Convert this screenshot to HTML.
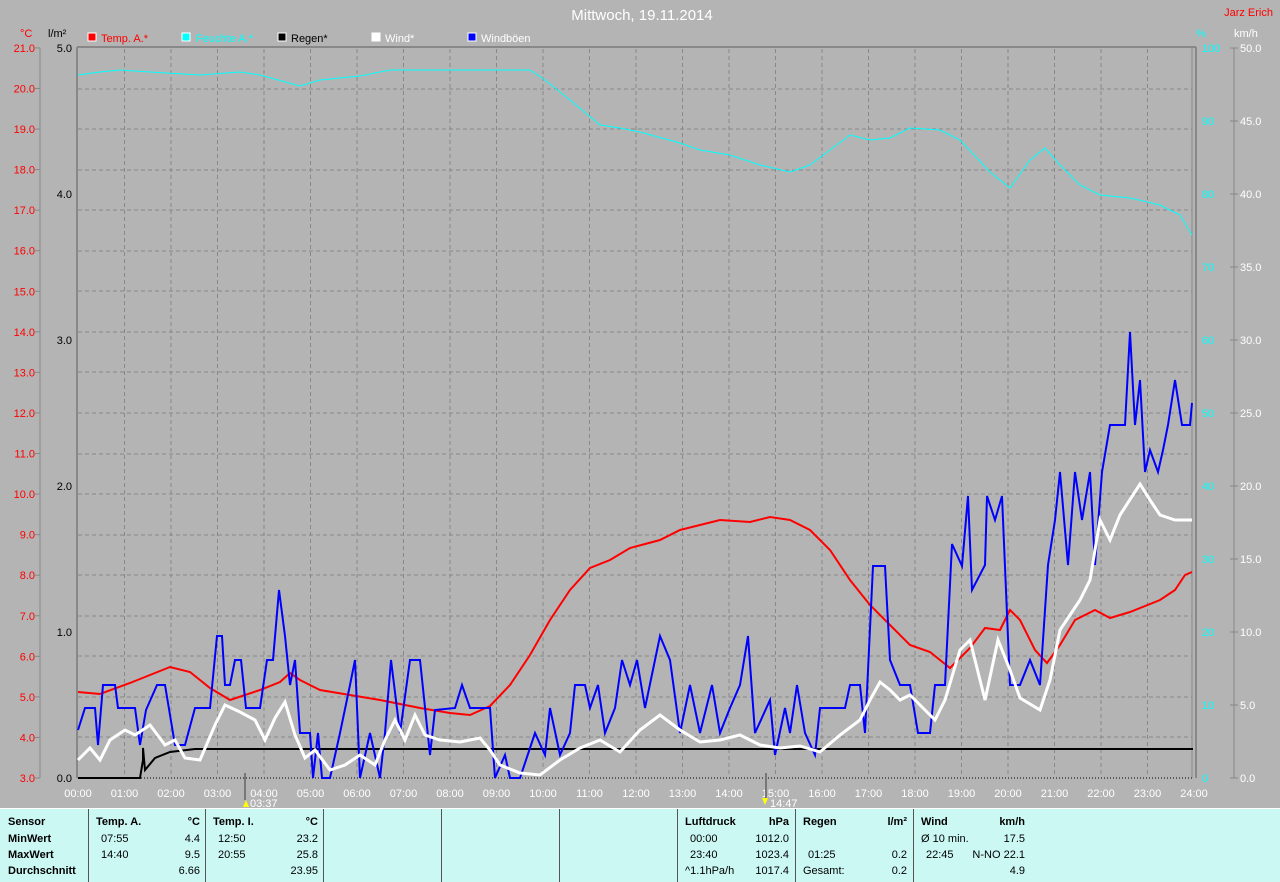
<!DOCTYPE html>
<html><head><meta charset="utf-8"><style>
body{margin:0;width:1280px;height:881px;background:#b4b4b4;overflow:hidden;font-family:"Liberation Sans",sans-serif}
svg{position:absolute;left:0;top:0}
.tb{position:absolute;left:0;top:808px;width:1280px;height:73px;background:#ccf8f4;border-top:1px solid #fff}
.c{position:absolute;top:0;height:73px;border-left:1px solid #555;font-size:11px;color:#000}
.r{position:absolute;white-space:nowrap}
.b{font-weight:bold}
</style></head><body>
<svg width="1280" height="808" viewBox="0 0 1280 808" font-family="Liberation Sans, sans-serif" font-size="11">
<text x="642" y="20" fill="#fff" font-size="15" text-anchor="middle">Mittwoch, 19.11.2014</text>
<text x="1273" y="16" fill="#f00" font-size="11" text-anchor="end">Jarz Erich</text>
<!-- legend -->
<rect x="88" y="33" width="8" height="8" fill="#f00" stroke="#fff"/><text x="101" y="42" fill="#f00">Temp. A.*</text>
<rect x="182" y="33" width="8" height="8" fill="#0ff" stroke="#fff"/><text x="196" y="42" fill="#0ff">Feuchte A.*</text>
<rect x="278" y="33" width="8" height="8" fill="#000" stroke="#fff"/><text x="291" y="42" fill="#000">Regen*</text>
<rect x="372" y="33" width="8" height="8" fill="#fff" stroke="#fff"/><text x="385" y="42" fill="#fff">Wind*</text>
<rect x="468" y="33" width="8" height="8" fill="#00f" stroke="#fff"/><text x="481" y="42" fill="#fff">Windböen</text>
<text x="20" y="37" fill="#f00">°C</text><text x="48" y="37" fill="#000">l/m²</text>
<text x="1196" y="37" fill="#0ff">%</text><text x="1234" y="37" fill="#fff">km/h</text>
<!-- axes lines -->
<line x1="40" y1="48" x2="40" y2="778" stroke="#888"/>
<line x1="1234" y1="48" x2="1234" y2="778" stroke="#888"/>
<g stroke="#888" stroke-width="2"><line x1="77" y1="47" x2="1196" y2="47"/><line x1="77" y1="47" x2="77" y2="778"/><line x1="1196" y1="47" x2="1196" y2="778"/></g>
<line x1="1192" y1="48" x2="1192" y2="778" stroke="#888"/>
<g id="grid" stroke="#888" stroke-dasharray="4,3">
<line x1="78" x2="1192" y1="89" y2="89"/><line x1="78" x2="1192" y1="129" y2="129"/><line x1="78" x2="1192" y1="170" y2="170"/><line x1="78" x2="1192" y1="210" y2="210"/><line x1="78" x2="1192" y1="251" y2="251"/><line x1="78" x2="1192" y1="291" y2="291"/><line x1="78" x2="1192" y1="332" y2="332"/><line x1="78" x2="1192" y1="372" y2="372"/><line x1="78" x2="1192" y1="413" y2="413"/><line x1="78" x2="1192" y1="454" y2="454"/><line x1="78" x2="1192" y1="494" y2="494"/><line x1="78" x2="1192" y1="535" y2="535"/><line x1="78" x2="1192" y1="575" y2="575"/><line x1="78" x2="1192" y1="616" y2="616"/><line x1="78" x2="1192" y1="656" y2="656"/><line x1="78" x2="1192" y1="697" y2="697"/><line x1="78" x2="1192" y1="737" y2="737"/>
</g>
<g stroke="#888" stroke-dasharray="4,3" id="vg"></g>
<line x1="78" y1="778" x2="1192" y2="778" stroke="#000" stroke-dasharray="1,2"/>
<g fill="#f00" text-anchor="end" id="tl"></g>
<g fill="#000" text-anchor="end">
<text x="72" y="52">5.0</text><text x="72" y="198">4.0</text><text x="72" y="344">3.0</text><text x="72" y="490">2.0</text><text x="72" y="636">1.0</text><text x="72" y="782">0.0</text></g>
<g fill="#0ff" id="hl"></g>
<g fill="#fff" id="wl"></g>
<g fill="#fff" text-anchor="middle" id="xl"></g>
<line x1="245" y1="773" x2="245" y2="800" stroke="#777" stroke-width="2"/>
<line x1="766" y1="773" x2="766" y2="800" stroke="#777" stroke-width="2"/>
<text x="250" y="807" fill="#fff">03:37</text><polygon points="243,807 246,800 249,807" fill="#ff0"/>
<text x="770" y="807" fill="#fff">14:47</text><polygon points="762,798 768,798 765,805" fill="#ff0"/>
<!-- humidity -->
<polyline fill="none" stroke="#0ff" stroke-width="1" points="78,75 100,72 120,70 150,72 200,75 240,72 260,75 300,86 320,80 360,76 390,70 530,70 545,80 570,100 600,125 620,128 640,132 680,143 700,150 730,155 760,165 790,172 810,165 830,150 850,135 870,140 890,138 910,128 940,130 960,140 990,172 1010,188 1030,160 1045,148 1060,165 1080,185 1100,195 1130,198 1160,205 1180,215 1192,235"/>
<!-- rain -->
<polyline fill="none" stroke="#000" stroke-width="2" points="78,778 140,778 143,760 143,748 145,770 155,758 170,752 195,749 1193,749"/>
<!-- temp -->
<polyline fill="none" stroke="#f00" stroke-width="2" points="78,692 100,694 130,683 150,675 170,667 190,672 210,688 230,700 260,690 280,682 290,673 300,680 320,690 350,695 380,700 420,708 450,713 470,715 490,706 510,685 530,655 550,620 570,590 590,568 610,560 630,548 660,540 680,530 720,520 750,522 770,517 790,520 810,530 830,550 850,580 870,605 890,625 910,645 930,652 950,668 970,648 985,628 1000,630 1010,610 1020,620 1035,650 1047,663 1060,645 1075,620 1095,610 1110,618 1130,612 1160,600 1175,590 1185,575 1192,572"/>
<!-- gusts -->
<polyline fill="none" stroke="#00f" stroke-width="2" points="78,730 85,708 95,708 98,745 103,685 115,685 118,708 135,708 140,745 146,710 157,685 165,685 175,745 185,745 195,708 210,708 217,636 222,636 225,685 230,685 235,660 241,660 246,708 260,708 267,660 273,660 279,590 285,636 290,685 295,660 300,733 310,733 313,778 318,733 322,778 330,778 340,733 350,685 355,660 360,778 370,733 380,778 385,733 391,660 400,733 410,660 420,660 430,755 435,710 455,708 462,685 470,708 490,708 495,778 505,755 510,778 520,778 535,733 545,755 550,708 560,755 570,733 575,685 585,685 590,708 598,685 605,733 615,708 622,660 630,685 637,660 645,708 655,660 660,636 670,660 680,733 690,685 700,733 712,685 720,733 730,708 740,685 748,636 755,733 770,700 775,755 785,708 790,733 797,685 805,733 815,755 820,708 845,708 850,685 860,685 865,733 873,566 885,566 890,660 900,685 910,685 918,733 930,733 935,685 945,685 952,544 962,566 968,496 972,590 985,565 987,496 995,520 1002,496 1010,685 1020,685 1030,660 1040,685 1048,565 1055,520 1060,472 1068,565 1075,472 1082,520 1090,472 1095,565 1102,472 1110,425 1125,425 1130,332 1135,425 1140,380 1145,472 1150,450 1158,472 1163,450 1168,425 1175,380 1182,425 1190,425 1192,403"/>
<!-- wind -->
<polyline fill="none" stroke="#fff" stroke-width="3" points="78,760 90,748 100,760 110,740 125,730 135,735 150,725 165,745 175,740 185,758 200,760 215,725 225,705 240,712 255,720 265,740 275,718 285,702 295,735 305,758 315,750 330,770 345,765 360,755 375,765 385,740 395,720 405,740 415,715 425,735 440,740 460,742 480,738 490,750 500,765 520,773 540,775 560,760 580,748 600,740 620,752 640,730 660,715 680,730 700,742 720,740 740,735 760,745 780,748 800,746 820,752 840,735 860,720 870,700 880,682 890,690 900,700 910,695 920,705 935,720 945,700 960,650 970,640 985,700 998,640 1010,670 1020,698 1040,710 1050,680 1060,630 1080,600 1090,580 1100,520 1110,540 1120,515 1140,484 1150,500 1160,515 1175,520 1192,520"/>
</svg>
<div class="tb">
<div class="c" style="left:0;border:none">
<div class="r b" style="left:8px;top:7px">Sensor</div><div class="r b" style="left:8px;top:24px">MinWert</div><div class="r b" style="left:8px;top:40px">MaxWert</div><div class="r b" style="left:8px;top:56px">Durchschnitt</div></div>
<div class="c" style="left:88px;width:117px">
<div class="r b" style="left:7px;top:7px">Temp. A.</div><div class="r b" style="right:6px;top:7px">°C</div>
<div class="r" style="left:12px;top:24px">07:55</div><div class="r" style="right:6px;top:24px">4.4</div>
<div class="r" style="left:12px;top:40px">14:40</div><div class="r" style="right:6px;top:40px">9.5</div>
<div class="r" style="right:6px;top:56px">6.66</div></div>
<div class="c" style="left:205px;width:118px">
<div class="r b" style="left:7px;top:7px">Temp. I.</div><div class="r b" style="right:6px;top:7px">°C</div>
<div class="r" style="left:12px;top:24px">12:50</div><div class="r" style="right:6px;top:24px">23.2</div>
<div class="r" style="left:12px;top:40px">20:55</div><div class="r" style="right:6px;top:40px">25.8</div>
<div class="r" style="right:6px;top:56px">23.95</div></div>
<div class="c" style="left:323px"></div><div class="c" style="left:441px"></div><div class="c" style="left:559px"></div>
<div class="c" style="left:677px;width:117px">
<div class="r b" style="left:7px;top:7px">Luftdruck</div><div class="r b" style="right:6px;top:7px">hPa</div>
<div class="r" style="left:12px;top:24px">00:00</div><div class="r" style="right:6px;top:24px">1012.0</div>
<div class="r" style="left:12px;top:40px">23:40</div><div class="r" style="right:6px;top:40px">1023.4</div>
<div class="r" style="left:7px;top:56px">^1.1hPa/h</div><div class="r" style="right:6px;top:56px">1017.4</div></div>
<div class="c" style="left:795px;width:117px">
<div class="r b" style="left:7px;top:7px">Regen</div><div class="r b" style="right:6px;top:7px">l/m²</div>
<div class="r" style="left:12px;top:40px">01:25</div><div class="r" style="right:6px;top:40px">0.2</div>
<div class="r" style="left:7px;top:56px">Gesamt:</div><div class="r" style="right:6px;top:56px">0.2</div></div>
<div class="c" style="left:913px;width:117px">
<div class="r b" style="left:7px;top:7px">Wind</div><div class="r b" style="right:6px;top:7px">km/h</div>
<div class="r" style="left:7px;top:24px">Ø 10 min.</div><div class="r" style="right:6px;top:24px">17.5</div>
<div class="r" style="left:12px;top:40px">22:45</div><div class="r" style="right:6px;top:40px">N-NO 22.1</div>
<div class="r" style="right:6px;top:56px">4.9</div></div>
</div>
<script>
var ns="http://www.w3.org/2000/svg";
function t(g,x,y,s,a){var e=document.createElementNS(ns,"text");e.setAttribute("x",x);e.setAttribute("y",y);if(a)e.setAttribute("text-anchor",a);e.textContent=s;document.getElementById(g).appendChild(e);}
for(var i=0;i<=18;i++){var y=778-i*40.56;t("tl",35,y+4,(3+i).toFixed(1));
var l=document.createElementNS(ns,"line");l.setAttribute("x1",35);l.setAttribute("x2",40);l.setAttribute("y1",y);l.setAttribute("y2",y);l.setAttribute("stroke","#888");document.querySelector("svg").appendChild(l);}
for(var h=0;h<=24;h++){var x=78+h*46.5;t("xl",x,797,(h<10?"0":"")+h+":00");
if(h>0&&h<24){var l=document.createElementNS(ns,"line");l.setAttribute("x1",x);l.setAttribute("x2",x);l.setAttribute("y1",49);l.setAttribute("y2",777);document.getElementById("vg").appendChild(l);}}
for(var k=0;k<=10;k++){var y=778-k*73;t("hl",1202,y+4,""+k*10);t("wl",1240,y+4,(k*5).toFixed(1));
var l=document.createElementNS(ns,"line");l.setAttribute("x1",1230);l.setAttribute("x2",1238);l.setAttribute("y1",y);l.setAttribute("y2",y);l.setAttribute("stroke","#888");document.querySelector("svg").appendChild(l);}
</script>
</body></html>
